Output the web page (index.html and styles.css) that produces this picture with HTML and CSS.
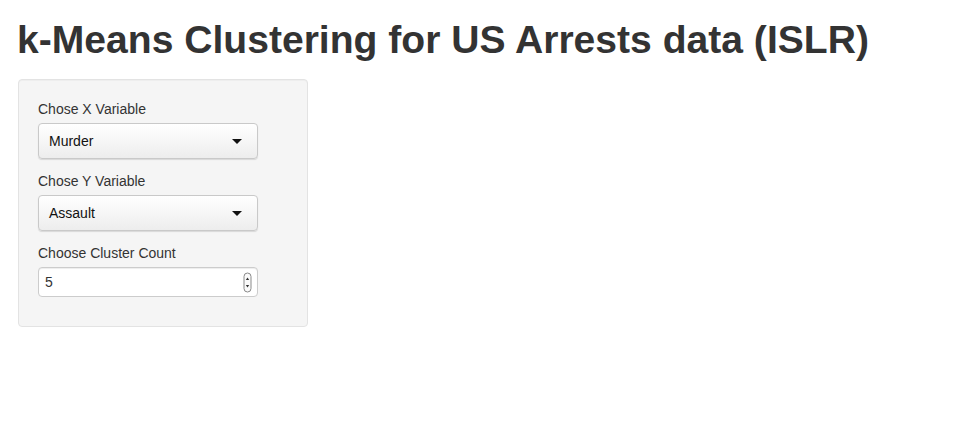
FILE: index.html
```html
<!DOCTYPE html>
<html>
<head>
<meta charset="utf-8">
<title>k-Means Clustering for US Arrests data (ISLR)</title>
<link rel="stylesheet" href="styles.css">
</head>
<body>
<div class="page">
  <h2 class="title">k-Means Clustering for US Arrests data (ISLR)</h2>
  <div class="well">
    <div class="form-group">
      <label class="label">Chose X Variable</label>
      <div class="select">
        <span class="select-text">Murder</span>
        <svg class="caret" width="10" height="5" viewBox="0 0 10 5"><path d="M0 0 H10 L5 5 Z" fill="#111"/></svg>
      </div>
    </div>
    <div class="form-group">
      <label class="label">Chose Y Variable</label>
      <div class="select">
        <span class="select-text">Assault</span>
        <svg class="caret" width="10" height="5" viewBox="0 0 10 5"><path d="M0 0 H10 L5 5 Z" fill="#111"/></svg>
      </div>
    </div>
    <div class="form-group last">
      <label class="label">Choose Cluster Count</label>
      <div class="number">
        <span class="number-text">5</span>
        <svg class="spinner" width="9" height="21" viewBox="0 0 9 21">
          <rect x="1" y="1" width="7" height="19" rx="3.5" fill="#fafafa" stroke="#8a8a8a" stroke-width="1"/>
          <path d="M2.8 8 L4.5 5.6 L6.2 8 Z" fill="#333"/>
          <path d="M2.8 13 L4.5 15.4 L6.2 13 Z" fill="#333"/>
        </svg>
      </div>
    </div>
  </div>
</div>
</body>
</html>
```

FILE: styles.css
```css
html, body {
  margin: 0;
  padding: 0;
  background: #ffffff;
}

body {
  font-family: "Liberation Sans", Arial, Helvetica, sans-serif;
  font-size: 14px;
  color: #333333;
}

.page {
  padding: 0 18px;
}

.title {
  margin: 18px 0 18px -1px;
  font-size: 39.1px;
  line-height: 1.1;
  font-weight: bold;
  color: #333333;
}

.well {
  width: 290px;
  box-sizing: border-box;
  background: #f5f5f5;
  border: 1px solid #e3e3e3;
  border-radius: 4px;
  box-shadow: inset 0 1px 1px rgba(0,0,0,0.03);
  padding: 19px 19px 29px 19px;
}

.form-group {
  display: flex;
  flex-direction: column;
  margin-bottom: 12px;
}

.form-group.last {
  margin-bottom: 0;
}

.label {
  display: block;
  line-height: 20px;
  margin-bottom: 4px;
  font-size: 14px;
  color: #333333;
}

.select {
  width: 220px;
  height: 36px;
  box-sizing: border-box;
  display: flex;
  align-items: center;
  justify-content: space-between;
  padding: 0 15px 0 10px;
  border: 1px solid #c9c9c9;
  border-radius: 4px;
  background: linear-gradient(#ffffff, #ededed);
  box-shadow: 0 1px 1px rgba(0,0,0,0.12);
  color: #111111;
}

.select-text {
  font-size: 14px;
  line-height: 20px;
}

.caret {
  display: block;
}

.number {
  width: 220px;
  height: 30px;
  box-sizing: border-box;
  display: flex;
  align-items: center;
  justify-content: space-between;
  padding: 0 5px 0 6px;
  border: 1px solid #cccccc;
  border-radius: 4px;
  background: #ffffff;
  box-shadow: inset 0 1px 1px rgba(0,0,0,0.075);
  color: #333333;
}

.number-text {
  font-size: 14px;
  line-height: 20px;
}

.spinner {
  display: block;
}
```
